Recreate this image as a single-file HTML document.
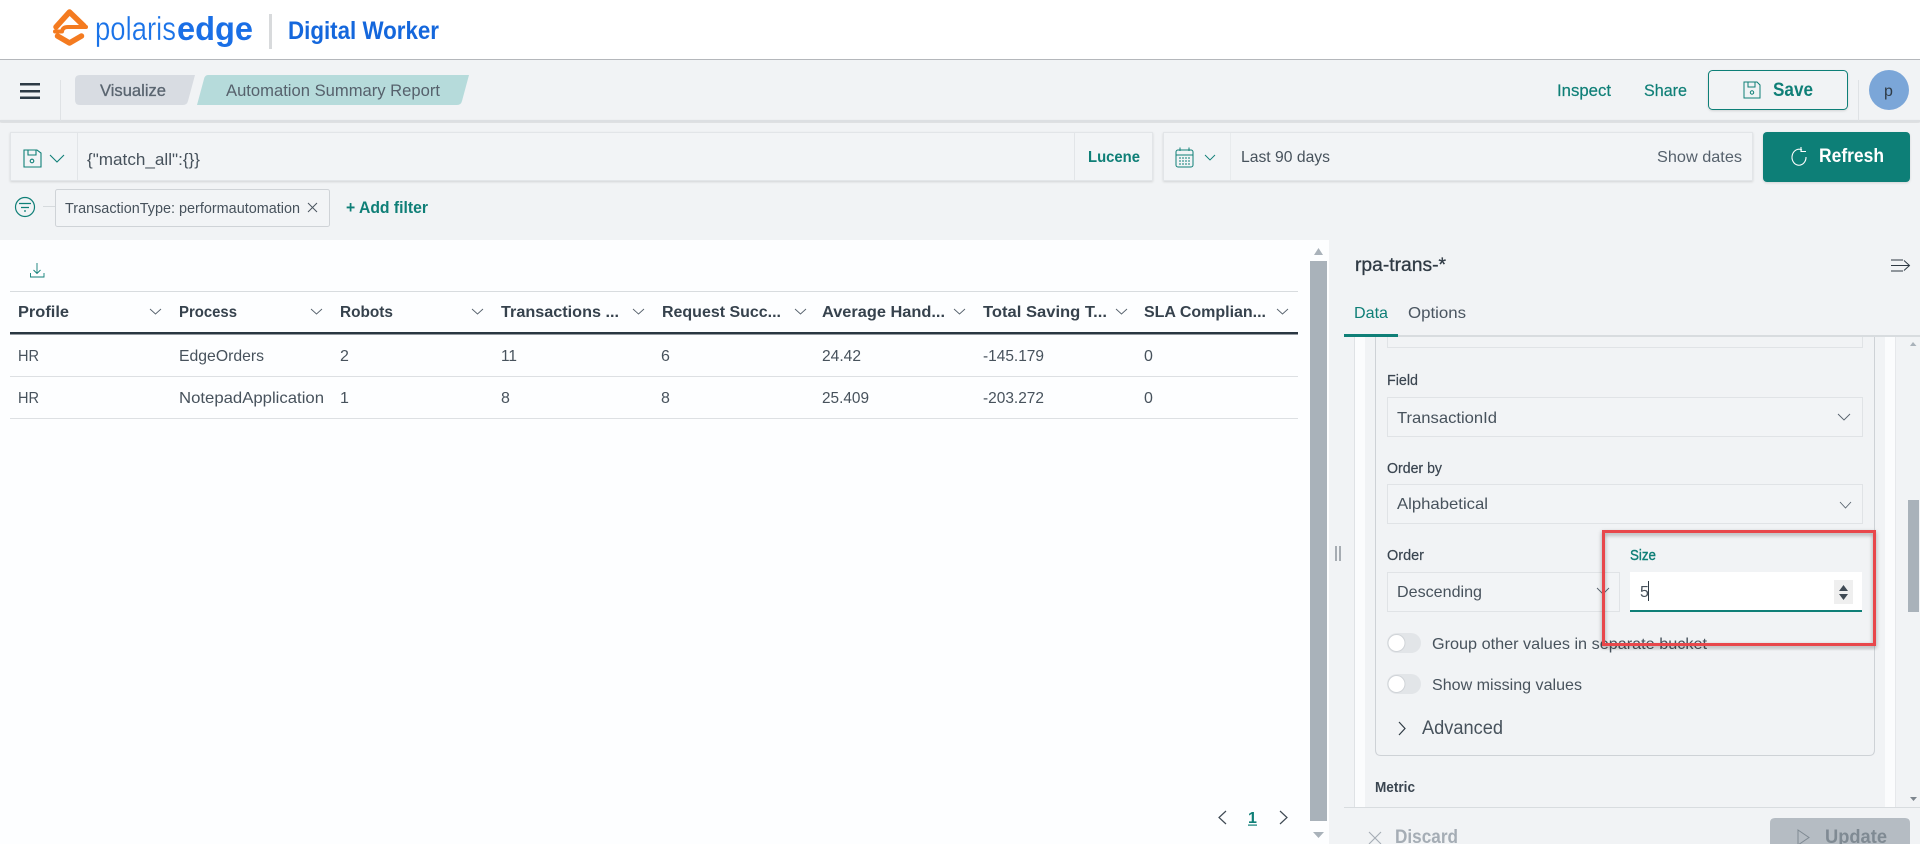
<!DOCTYPE html>
<html><head><meta charset="utf-8"><title>Automation Summary Report</title>
<style>
html,body{margin:0;padding:0;width:1920px;height:844px;overflow:hidden;background:#f1f3f5}
svg{display:block}
text{font-family:"Liberation Sans","Noto Sans CJK JP",sans-serif;fill:#47525c;font-size:16px}
.b{font-weight:700}
.t{fill:#0f7f77}
.h{font-weight:700;fill:#36424d;font-size:16px}
.c{fill:none;stroke:#56616c;stroke-width:.9}
.l{font-size:15px;fill:#3a4550;stroke:#3a4550;stroke-width:.2}
</style></head><body>
<svg width="1920" height="844" viewBox="0 0 1920 844" xmlns="http://www.w3.org/2000/svg">
<defs>
<filter id="s" x="-5%" y="-50%" width="110%" height="200%"><feDropShadow dx="0" dy="1" stdDeviation="1" flood-color="#000" flood-opacity=".13"/></filter>
<filter id="r" x="-5%" y="-5%" width="110%" height="110%"><feDropShadow dx="0" dy="2" stdDeviation="2" flood-color="#000" flood-opacity=".35"/></filter>
</defs>
<rect width="1920" height="844" fill="#f1f3f5"/>

<!-- header -->
<rect width="1920" height="59" fill="#fff"/>
<rect y="59" width="1920" height="1" fill="#b4b7bb"/>
<g fill="none" stroke="#f47b20" stroke-linejoin="round" stroke-linecap="round">
<path d="M56 27 L69.500 12 L84 26" stroke-width="5.500"/>
<path d="M86 27 H68 Q62.500 27 62 31.500 H55" stroke-width="4"/>
<path d="M57.500 36 L69.500 43 L81.500 36" stroke-width="5.500"/>
</g>
<text x="95" y="40" style="font-size:33px;fill:#1a73e8;stroke:#fff;stroke-width:.3" textLength="81" lengthAdjust="spacingAndGlyphs">polaris</text>
<text x="177" y="40" class="b" style="font-size:33px;fill:#1a6fe6" textLength="76" lengthAdjust="spacingAndGlyphs">edge</text>
<rect x="269" y="14" width="3" height="35" fill="#d8dadc"/>
<text x="288" y="39" class="b" style="font-size:25px;fill:#1467dc" textLength="151" lengthAdjust="spacingAndGlyphs">Digital Worker</text>

<!-- toolbar -->
<rect y="120" width="1920" height="2" fill="#dcdfe2" filter="url(#s)"/>
<rect x="20" y="83" width="20" height="2.500" fill="#2d3a45"/><rect x="20" y="90" width="20" height="2.500" fill="#2d3a45"/><rect x="20" y="96.500" width="20" height="2.500" fill="#2d3a45"/>
<rect x="60" y="80" width="1" height="41" fill="#dfe2e5"/>
<path d="M80 75 H195 L188 101 Q187 105 183 105 H80 Q75 105 75 100 V80 Q75 75 80 75Z" fill="#d8dce2"/>
<path d="M208 75 H469 L462 101 Q461 105 457 105 H197 L204 79 Q205 75 208 75Z" fill="#b6dbdb"/>
<text x="100" y="96" style="font-size:17px;fill:#5a6570;stroke:#5a6570;stroke-width:.3" textLength="66" lengthAdjust="spacingAndGlyphs">Visualize</text>
<text x="226" y="96" style="font-size:17px;fill:#56616c" textLength="214" lengthAdjust="spacingAndGlyphs">Automation Summary Report</text>
<text x="1557" y="96" class="t" style="font-size:17px;stroke:#0f7f77;stroke-width:.2" textLength="54" lengthAdjust="spacingAndGlyphs">Inspect</text>
<text x="1644" y="96" class="t" style="font-size:17px;stroke:#0f7f77;stroke-width:.2" textLength="43" lengthAdjust="spacingAndGlyphs">Share</text>
<rect x="1708.500" y="70.500" width="139" height="39" rx="4" fill="#f1f3f5" stroke="#0f7f77" filter="url(#s)"/>
<g fill="none" stroke="#0f7f77" stroke-width="1">
<path d="M1744 82 H1757 L1760 85 V98 H1744Z"/><path d="M1748 82 V87 H1755 V82"/><circle cx="1752" cy="92.500" r="1.700"/>
</g>
<text x="1773" y="96" class="b t" style="font-size:19px" textLength="40" lengthAdjust="spacingAndGlyphs">Save</text>
<rect x="1858" y="80" width="1" height="41" fill="#dfe2e5"/>
<circle cx="1889" cy="90" r="20" fill="#7ba6d8"/>
<text x="1884" y="96" style="font-size:16px;fill:#2f3b46">p</text>

<!-- query bar -->
<rect x="10.500" y="132.500" width="1142" height="48" fill="#f2f4f6" stroke="#e2e5e8" filter="url(#s)"/>
<rect x="77" y="133" width="1" height="47" fill="#e2e5e8"/>
<rect x="1074" y="133" width="1" height="47" fill="#e2e5e8"/>
<g fill="none" stroke="#0f7f77" stroke-width="1.100">
<path d="M24 150 H37 L41 153 V167 H24Z"/><path d="M28 150 V155 H36 V150"/><circle cx="32" cy="161" r="1.800"/>
<path d="M50 155 L57 162 L64 155"/>
</g>
<text x="87" y="165" style="font-size:17px" textLength="113" lengthAdjust="spacingAndGlyphs">{"match_all":{}}</text>
<text x="1088" y="162" class="b t" style="font-size:16px" textLength="52" lengthAdjust="spacingAndGlyphs">Lucene</text>
<rect x="1163.500" y="132.500" width="589" height="48" fill="#f2f4f6" stroke="#e2e5e8" filter="url(#s)"/>
<rect x="1230" y="133" width="1" height="47" fill="#e8ebed"/>
<g fill="none" stroke="#0f7f77" stroke-width="1">
<rect x="1176" y="150" width="17" height="17" rx="2"/><path d="M1176 155 H1193 M1180 147.500 V151 M1189 147.500 V151"/>
<path d="M1179 158 H1190 M1179 161 H1190 M1179 164 H1190" stroke-dasharray="2 1"/>
<path d="M1205 155 L1210 160 L1215 155" stroke-width=".9"/>
</g>
<text x="1241" y="162" style="font-size:16px" textLength="89" lengthAdjust="spacingAndGlyphs">Last 90 days</text>
<text x="1657" y="162" style="font-size:16px;fill:#56616c" textLength="85" lengthAdjust="spacingAndGlyphs">Show dates</text>
<rect x="1763" y="132" width="147" height="50" rx="4" fill="#0f7f77" filter="url(#s)"/>
<path d="M1802 150 A7 8 0 1 0 1806 157 M1801 147 L1801 151.500 L1806 151.500" fill="none" stroke="#fff" stroke-width="1.100"/>
<text x="1819" y="162" class="b" style="font-size:19px;fill:#fff" textLength="65" lengthAdjust="spacingAndGlyphs">Refresh</text>

<!-- filter row -->
<circle cx="25" cy="207" r="9.500" fill="none" stroke="#0f7f77" stroke-width="1.200"/>
<path d="M19 203.500 H31 M21 207.500 H29 M24 211 H26" stroke="#0f7f77" stroke-width="1.200"/>
<rect x="43" y="206" width="12" height="1" fill="#d6dadd"/>
<rect x="55.500" y="189.500" width="274" height="37" rx="2" fill="#f2f4f6" stroke="#cfd3d7"/>
<text x="65" y="213" style="font-size:15px" textLength="235" lengthAdjust="spacingAndGlyphs">TransactionType: performautomation</text>
<path d="M308 203 L317 212 M317 203 L308 212" stroke="#4a5560" fill="none"/>
<text x="346" y="213" class="b t" style="font-size:17px" textLength="82" lengthAdjust="spacingAndGlyphs">+ Add filter</text>

<!-- left panel -->
<rect x="0" y="240" width="1329" height="604" fill="#fdfeff"/>
<rect x="1310" y="261" width="17" height="560" fill="#a9b2ba"/>
<path d="M1314 255 H1323 L1318.500 248Z" fill="#a9b2ba"/>
<path d="M1313 832 H1324 L1318.500 838Z" fill="#a9b2ba"/>
<path d="M37 263 V273 M33.500 270 L37 273.500 L40.500 270 M30.500 273 V277 H44 V273" fill="none" stroke="#0f7f77" stroke-width=".9"/>
<rect x="10" y="291" width="1288" height="1" fill="#d8dcdf"/>
<rect x="10" y="332" width="1288" height="2.500" fill="#2a3742"/>
<rect x="10" y="376" width="1288" height="1" fill="#dde0e3"/>
<rect x="10" y="418" width="1288" height="1" fill="#dde0e3"/>

<text x="18" y="317" class="h" textLength="51" lengthAdjust="spacingAndGlyphs">Profile</text>
<text x="179" y="317" class="h" textLength="58" lengthAdjust="spacingAndGlyphs">Process</text>
<text x="340" y="317" class="h" textLength="53" lengthAdjust="spacingAndGlyphs">Robots</text>
<text x="501" y="317" class="h" textLength="118" lengthAdjust="spacingAndGlyphs">Transactions ...</text>
<text x="662" y="317" class="h" textLength="119" lengthAdjust="spacingAndGlyphs">Request Succ...</text>
<text x="822" y="317" class="h" textLength="123" lengthAdjust="spacingAndGlyphs">Average Hand...</text>
<text x="983" y="317" class="h" textLength="124" lengthAdjust="spacingAndGlyphs">Total Saving T...</text>
<text x="1144" y="317" class="h" textLength="122" lengthAdjust="spacingAndGlyphs">SLA Complian...</text>
<g class="c">
<path d="M150 309 L155.500 314 L161 309"/><path d="M311 309 L316.500 314 L322 309"/><path d="M472 309 L477.500 314 L483 309"/><path d="M633 309 L638.500 314 L644 309"/><path d="M795 309 L800.500 314 L806 309"/><path d="M954 309 L959.500 314 L965 309"/><path d="M1116 309 L1121.500 314 L1127 309"/><path d="M1277 309 L1282.500 314 L1288 309"/>
</g>
<g>
<text x="18" y="361" textLength="21" lengthAdjust="spacingAndGlyphs">HR</text>
<text x="179" y="361" textLength="85" lengthAdjust="spacingAndGlyphs">EdgeOrders</text>
<text x="340" y="361">2</text>
<text x="501" y="361" textLength="16" lengthAdjust="spacingAndGlyphs">11</text>
<text x="661" y="361">6</text>
<text x="822" y="361" textLength="39" lengthAdjust="spacingAndGlyphs">24.42</text>
<text x="983" y="361" textLength="61" lengthAdjust="spacingAndGlyphs">-145.179</text>
<text x="1144" y="361">0</text>
<text x="18" y="403" textLength="21" lengthAdjust="spacingAndGlyphs">HR</text>
<text x="179" y="403" textLength="145" lengthAdjust="spacingAndGlyphs">NotepadApplication</text>
<text x="340" y="403">1</text>
<text x="501" y="403">8</text>
<text x="661" y="403">8</text>
<text x="822" y="403" textLength="47" lengthAdjust="spacingAndGlyphs">25.409</text>
<text x="983" y="403" textLength="61" lengthAdjust="spacingAndGlyphs">-203.272</text>
<text x="1144" y="403">0</text>
</g>
<path d="M1226 811 L1219 817.500 L1226 824 M1280 811 L1287 817.500 L1280 824" fill="none" stroke="#3f4a54" stroke-width="1.200"/>
<text x="1248" y="823" class="b t" style="font-size:16px">1</text>
<rect x="1248" y="824.500" width="9" height="1.200" fill="#0f7f77"/>

<!-- resizer -->
<path d="M1336 546 V561 M1340 546 V561" stroke="#5a6570" stroke-width="1"/>

<!-- right panel -->
<text x="1355" y="271" style="font-size:19px;fill:#2f3a44;stroke:#2f3a44;stroke-width:.3" textLength="91" lengthAdjust="spacingAndGlyphs">rpa-trans-*</text>
<path d="M1891 260 H1903 M1891 265.500 H1909 M1891 271 H1903 M1904 260.500 L1909.500 265.500 L1904 270.500" fill="none" stroke="#2f3a44" stroke-width="1"/>
<text x="1354" y="318" class="t" textLength="34" lengthAdjust="spacingAndGlyphs">Data</text>
<text x="1408" y="318" style="fill:#4a5560" textLength="58" lengthAdjust="spacingAndGlyphs">Options</text>
<rect x="1344" y="335" width="576" height="2" fill="#d8dcdf"/>
<rect x="1344" y="334" width="54" height="3" fill="#0f7f77"/>

<rect x="1354" y="337" width="1" height="470" fill="#dfe2e5"/>
<rect x="1355" y="337" width="10" height="470" fill="#fbfcfd"/>
<rect x="1895" y="337" width="1" height="470" fill="#e6e8eb"/>
<rect x="1885" y="337" width="10" height="470" fill="#fbfcfd"/>
<path d="M1375.500 337 V750 Q1375.500 755.500 1381 755.500 H1869 Q1874.500 755.500 1874.500 750 V337" fill="none" stroke="#ced2d6"/>
<path d="M1387.500 337 V347.500 H1862.500 V337" fill="none" stroke="#e0e3e6"/>

<text x="1387" y="385" class="l" textLength="31" lengthAdjust="spacingAndGlyphs">Field</text>
<rect x="1387.500" y="397.500" width="475" height="39" fill="#f2f4f6" stroke="#e0e3e6"/>
<text x="1397" y="423" textLength="100" lengthAdjust="spacingAndGlyphs">TransactionId</text>
<path d="M1838 414 L1844 420 L1850 414" class="c"/>

<text x="1387" y="473" class="l" textLength="55" lengthAdjust="spacingAndGlyphs">Order by</text>
<rect x="1387.500" y="484.500" width="475" height="39" fill="#f2f4f6" stroke="#e0e3e6"/>
<text x="1397" y="509" textLength="91" lengthAdjust="spacingAndGlyphs">Alphabetical</text>
<path d="M1840 502 L1845.500 508 L1851 502" class="c"/>

<text x="1387" y="560" class="l" textLength="37" lengthAdjust="spacingAndGlyphs">Order</text>
<text x="1630" y="560" class="l t" style="fill:#0f7f77;stroke:#0f7f77;stroke-width:.4" textLength="26" lengthAdjust="spacingAndGlyphs">Size</text>
<rect x="1387.500" y="572.500" width="232" height="39" fill="#f2f4f6" stroke="#e0e3e6"/>
<text x="1397" y="597" textLength="85" lengthAdjust="spacingAndGlyphs">Descending</text>
<path d="M1597 588 L1603 594 L1609 588" class="c"/>
<rect x="1630" y="572" width="232" height="39" fill="#fff"/>
<rect x="1630" y="610" width="232" height="2" fill="#0f7f77"/>
<text x="1640" y="597">5</text>
<rect x="1648" y="581" width="1" height="20" fill="#2f3a44"/>
<rect x="1834" y="580" width="19" height="24" fill="#efefef"/>
<path d="M1843.500 585 L1839 591 H1848Z M1843.500 600 L1839 594 H1848Z" fill="#3f4a54"/>

<rect x="1387" y="633" width="34" height="20" rx="10" fill="#e2e5e8"/>
<circle cx="1396.500" cy="643" r="8.500" fill="#fff" stroke="#d0d4d8"/>
<text x="1432" y="649" textLength="275" lengthAdjust="spacingAndGlyphs">Group other values in separate bucket</text>
<rect x="1387" y="674" width="34" height="20" rx="10" fill="#e2e5e8"/>
<circle cx="1396.500" cy="684" r="8.500" fill="#fff" stroke="#d0d4d8"/>
<text x="1432" y="690" textLength="150" lengthAdjust="spacingAndGlyphs">Show missing values</text>
<path d="M1399 722 L1405 728.500 L1399 735" fill="none" stroke="#2f3a44" stroke-width="1.200"/>
<text x="1422" y="734" style="font-size:19px" textLength="81" lengthAdjust="spacingAndGlyphs">Advanced</text>
<text x="1375" y="792" class="l b" style="stroke:none" textLength="40" lengthAdjust="spacingAndGlyphs">Metric</text>

<!-- right scrollbar -->
<rect x="1908" y="500" width="11" height="112" fill="#a9b2ba"/>
<path d="M1910 346 H1916.500 L1913 342Z" fill="#a9b2ba"/>
<path d="M1910 797 H1917 L1913.500 801Z" fill="#7d868e"/>

<!-- red box -->
<rect x="1603.500" y="531.500" width="271" height="113" fill="none" stroke="#e8474b" stroke-width="3" filter="url(#r)"/>

<!-- footer -->
<rect x="1344" y="807" width="576" height="37" fill="#f1f3f5"/>
<rect x="1344" y="807" width="576" height="1" fill="#d8dcdf"/>
<path d="M1369 832 L1381 844 M1381 832 L1369 844" stroke="#a5adb5" stroke-width="1.100"/>
<text x="1395" y="843" class="b" style="font-size:19px;fill:#a5adb5" textLength="63" lengthAdjust="spacingAndGlyphs">Discard</text>
<path d="M1770 844 V823 Q1770 818 1775 818 H1905 Q1910 818 1910 823 V844Z" fill="#b5bcc3"/>
<path d="M1798 830 L1809 837.500 L1798 845Z" fill="none" stroke="#7f8a93" stroke-width="1"/>
<text x="1825" y="843" class="b" style="font-size:19px;fill:#7f8a93" textLength="62" lengthAdjust="spacingAndGlyphs">Update</text>
</svg>
</body></html>
